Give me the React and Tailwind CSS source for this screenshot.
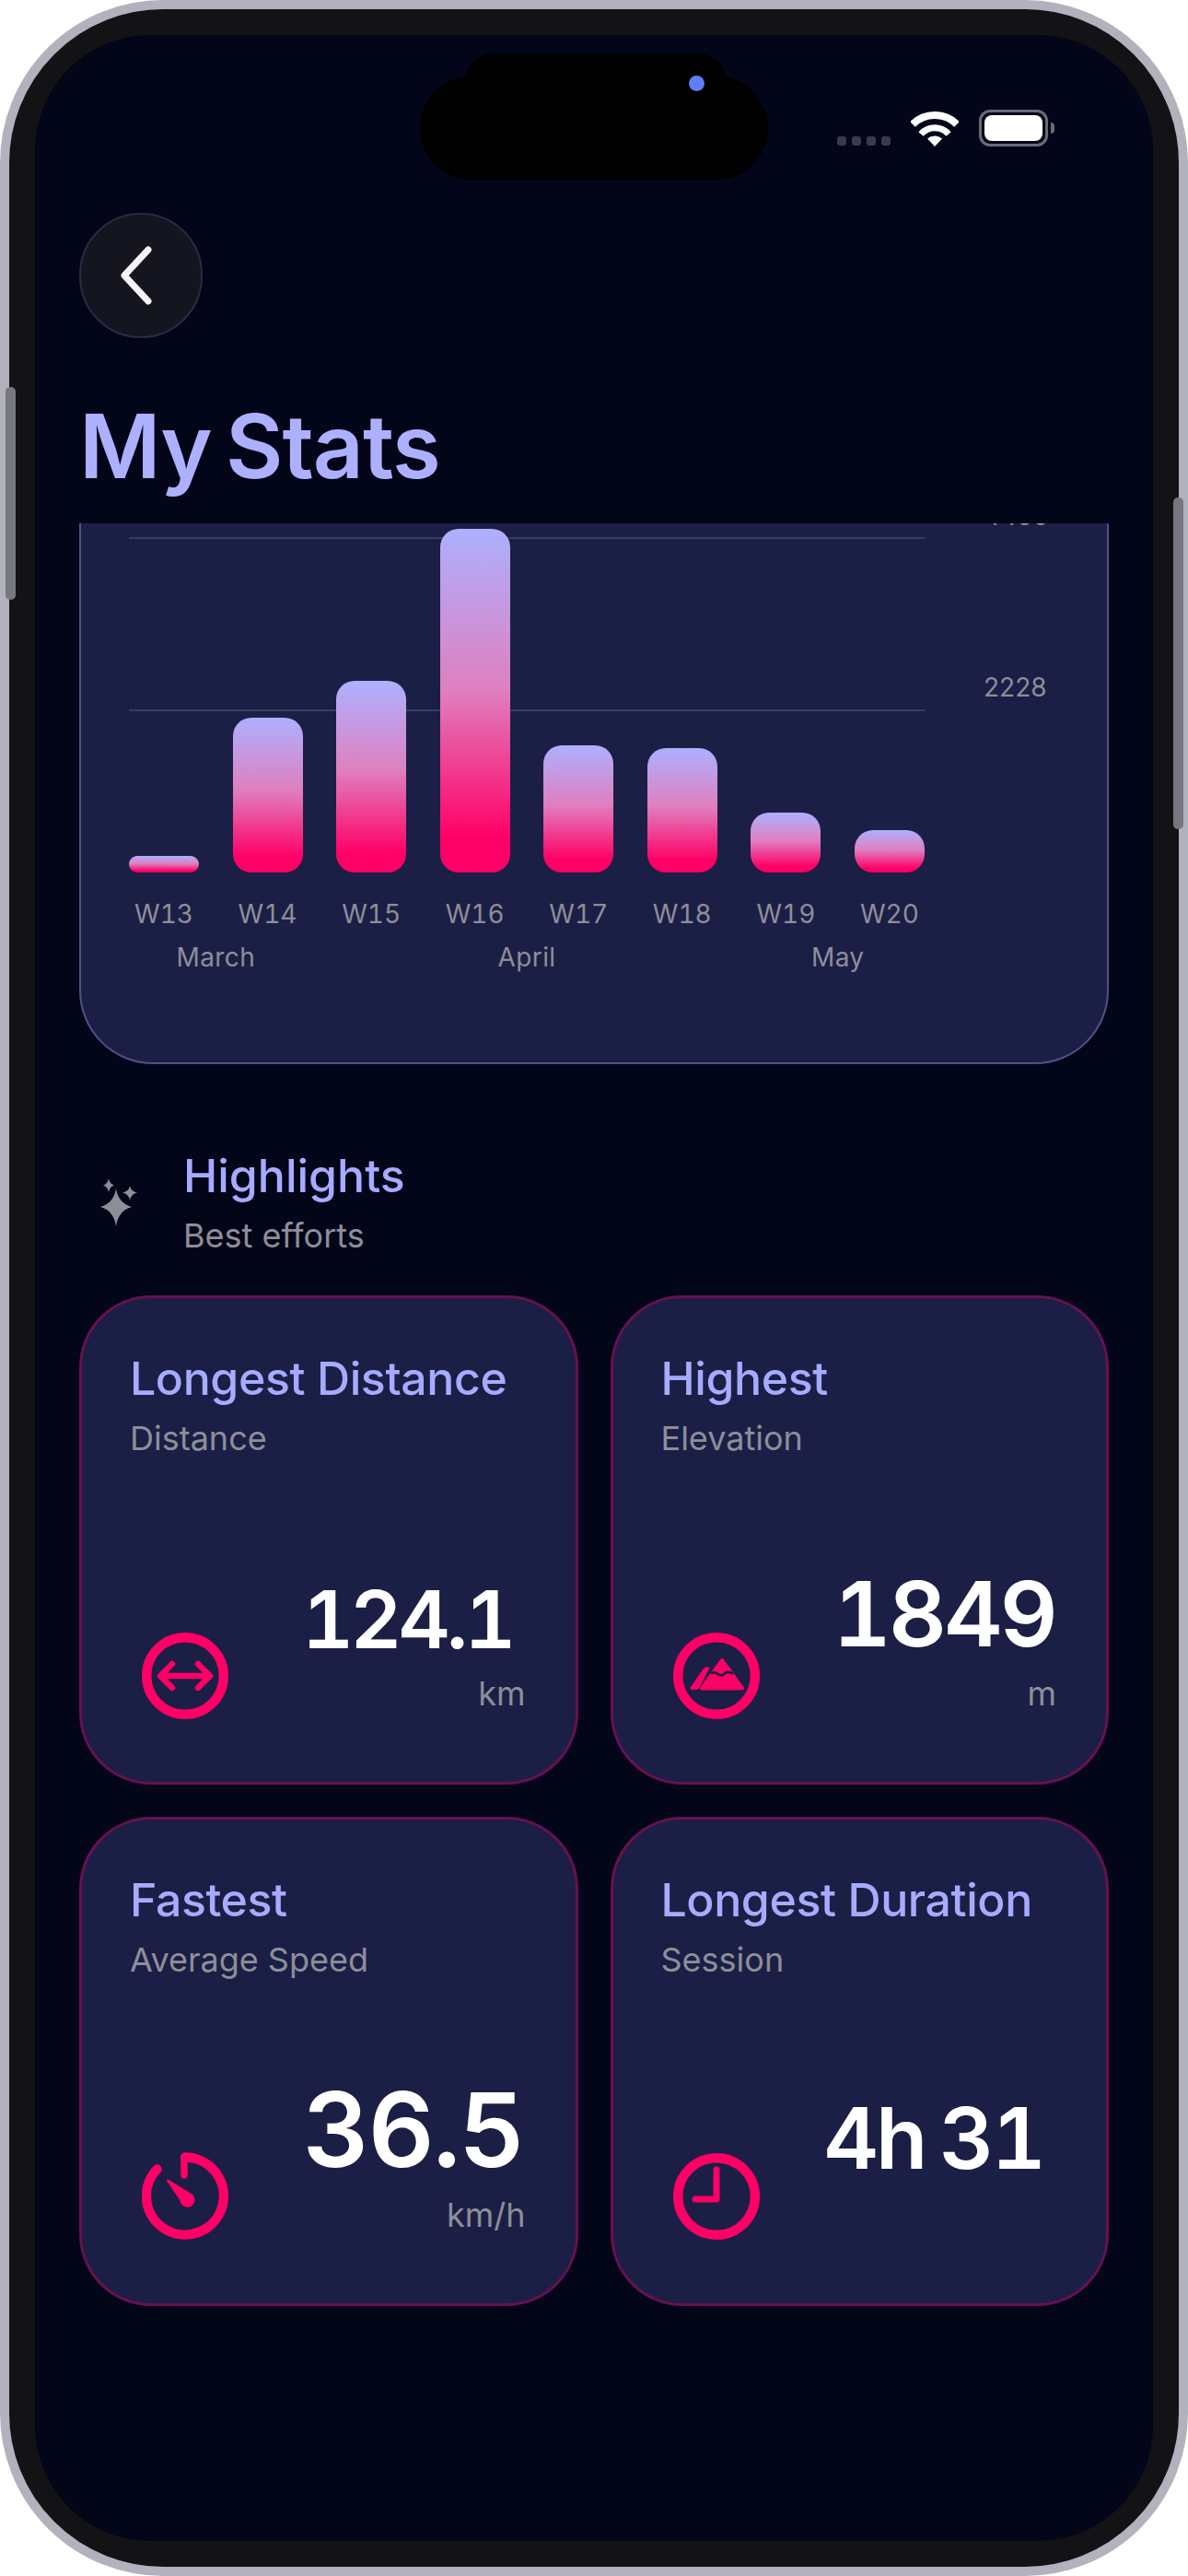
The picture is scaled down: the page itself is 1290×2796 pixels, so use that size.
const bars = [
  { w: "W13", top: 929 },
  { w: "W14", top: 779 },
  { w: "W15", top: 739 },
  { w: "W16", top: 574 },
  { w: "W17", top: 809 },
  { w: "W18", top: 812 },
  { w: "W19", top: 882 },
  { w: "W20", top: 901 },
];

const Ring = ({ children }) => (
  <svg width="94" height="94" viewBox="0 0 94 94" fill="none" className="shrink-0">
    <circle cx="47" cy="47" r="41.8" stroke="#ff0066" strokeWidth="10.4" />
    {children}
  </svg>
);

const DistanceIcon = () => (
  <Ring>
    <path
      d="M22 47H72M33 34L20 47L33 60M61 34L74 47L61 60"
      stroke="#ff0066"
      strokeWidth="6.5"
      strokeLinecap="round"
      strokeLinejoin="round"
    />
  </Ring>
);

const MountainIcon = () => (
  <Ring>
    <path d="M31 60.5L53 30L75 60.5Z" fill="#ff0066" stroke="#ff0066" strokeWidth="4" strokeLinejoin="round" />
    <path d="M41 44.5Q45 42 48.5 45T56 44.5T65 45" stroke="#1b1f45" strokeWidth="2.6" fill="none" />
    <path d="M19 59L33 39Q36 36 39.5 38.5L28 60.5Q27 62 24 62H20.500Q17.500 62 19 59Z" fill="#ff0066" />
  </Ring>
);

const SpeedIcon = () => (
  <svg width="94" height="96" viewBox="0 0 94 96" fill="none" className="shrink-0">
    <path
      d="M47 5.500A42 42 0 1 1 16.500 18.500"
      stroke="#ff0066"
      strokeWidth="10.400"
      strokeLinecap="round"
    />
    <path d="M46 6V25" stroke="#ff0066" strokeWidth="7.500" strokeLinecap="round" />
    <path d="M28.500 29.500L53 44.500A8 8 0 1 1 41.500 52.500L27 31Q26.500 29 28.500 29.500Z" fill="#ff0066" />
  </svg>
);

const ClockIcon = () => (
  <svg width="94" height="96" viewBox="0 0 94 96" fill="none" className="shrink-0">
    <circle cx="47" cy="48" r="41.800" stroke="#ff0066" strokeWidth="10.400" />
    <path d="M47 19V51H24" stroke="#ff0066" strokeWidth="7" strokeLinecap="round" strokeLinejoin="round" />
  </svg>
);

const Sparkles = () => (
  <svg width="42" height="52" viewBox="0 0 42 52" fill="#8e8e99" className="shrink-0">
    <path d="M19 11Q21.500 27 36 31Q21.500 35 19 52Q16.500 35 2 31Q16.500 27 19 11Z" />
    <path d="M11 0Q12 6 17 7.500Q12 9 11 15Q10 9 5 7.500Q10 6 11 0Z" />
    <path d="M34 8Q35 14 42 15.500Q35 17 34 24Q33 17 26 15.500Q33 14 34 8Z" />
  </svg>
);

const Wifi = () => (
  <svg width="52" height="38" viewBox="0 0 52 38" fill="none" className="shrink-0">
    <path d="M2 14A34 34 0 0 1 50 14" stroke="#ffffff" strokeWidth="8" />
    <path d="M11 24.500A20 20 0 0 1 41 24.500" stroke="#ffffff" strokeWidth="7" />
    <path d="M18 29.500A12 12 0 0 1 34 29.500L26 38Z" fill="#ffffff" />
  </svg>
);

const cards = [
  {
    title: "Longest Distance",
    sub: "Distance",
    value: "124.1",
    unit: "km",
    size: "text-[87px] tracking-[-4px] mr-[14px]",
    icon: <DistanceIcon />,
  },
  {
    title: "Highest",
    sub: "Elevation",
    value: "1849",
    unit: "m",
    size: "text-[98px] tracking-[-3px] mr-[1px]",
    icon: <MountainIcon />,
  },
  {
    title: "Fastest",
    sub: "Average Speed",
    value: "36.5",
    unit: "km/h",
    size: "text-[112px] tracking-[-2px] mr-[2px]",
    icon: <SpeedIcon />,
  },
  {
    title: "Longest Duration",
    sub: "Session",
    value: "4h 31",
    unit: "",
    size: "text-[92px] tracking-[-3px] [word-spacing:-6px] mr-[14px]",
    icon: <ClockIcon />,
  },
];

function Card({ title, sub, value, unit, size, icon }) {
  return (
    <div className="flex h-[531px] flex-col rounded-[78px] border-[3px] border-[#6a1050] bg-[#1b1f45]">
      <div className="pl-[52px] pt-[57px]">
        <div className="text-[50px] leading-[60px] font-[550] tracking-[-0.4px] text-[#a6abff]">{title}</div>
        <div className="mt-[13px] text-[36px] leading-[44px] text-[#8e8e99]">{sub}</div>
      </div>
      <div className="mt-auto flex items-end justify-between pb-[68px] pl-[65px] pr-[54px]">
        {icon}
        <div className="flex flex-col items-end">
          <div className={`${size} leading-none font-semibold whitespace-nowrap text-white tabular-nums`}>{value}</div>
          <div className="mt-[15px] mb-[6px] h-[44px] text-[36px] leading-[44px] text-[#8e8e99]">{unit}</div>
        </div>
      </div>
    </div>
  );
}

export default function App() {
  return (
    <div className="relative h-[2796px] w-[1290px] bg-white font-['Inter',sans-serif]">
      <div className="relative h-full w-full rounded-[177px] border-[10px] border-[#b2b2bc] bg-[#131316] p-[28px]">
        <div className="flex h-full flex-col overflow-hidden rounded-[125px] bg-[#030518]">
          {/* status bar */}
          <div className="flex h-[193px] items-start justify-end pr-[107px] pt-[81px]">
            <div className="flex items-end">
              <div className="mb-px flex gap-[6px]">
                <span className="h-[10px] w-[10px] rounded-[3px] bg-[#3a3a48]" />
                <span className="h-[10px] w-[10px] rounded-[3px] bg-[#3a3a48]" />
                <span className="h-[10px] w-[10px] rounded-[3px] bg-[#3a3a48]" />
                <span className="h-[10px] w-[10px] rounded-[3px] bg-[#3a3a48]" />
              </div>
              <div className="ml-[22px]">
                <Wifi />
              </div>
              <div className="ml-[22px] flex items-center">
                <div className="flex h-[40px] w-[75px] items-center justify-center rounded-[12px] border-[3px] border-[#6a6a78]">
                  <div className="h-[28px] w-[63px] rounded-[8px] bg-white" />
                </div>
                <div className="ml-[3px] h-[12px] w-[4px] rounded-r-full bg-[#6a6a78]" />
              </div>
            </div>
          </div>

          {/* back button */}
          <div className="ml-[48px] flex h-[136px] w-[134px] items-center justify-center rounded-full border-2 border-[#2a2b47] bg-[#15151f]">
            <svg width="44" height="66" viewBox="0 0 44 66" fill="none" className="-ml-[9px]">
              <path d="M34 5L8 33L34 61" stroke="#f4f4f8" strokeWidth="7" strokeLinecap="round" strokeLinejoin="round" />
            </svg>
          </div>

          {/* title */}
          <h1 className="ml-[48px] mt-[69px] text-[96px] leading-none font-semibold tracking-[-1px] [word-spacing:-8px] text-[#adb0ff]">
            My Stats
          </h1>

          {/* scrolled content */}
          <div className="mt-[36px] min-h-0 flex-1 overflow-hidden">
            <div className="mx-[48px] -mt-[120px] rounded-[80px] border-2 border-[#4e5288] bg-[#1b1f45] pb-[97px] pl-[52px] pt-[90px]">
              <div className="relative flex h-[407px] w-[864px] items-end justify-between">
                <div className="absolute left-0 right-0 top-[43px] h-[2px] bg-[#3a3d63]" />
                <div className="absolute left-0 right-0 top-[230px] h-[2px] bg-[#3a3d63]" />
                <div className="absolute left-[928px] top-[3px] text-[28px] leading-[34px] text-[#8e8e99]">4456</div>
                <div className="absolute left-[928px] top-[189px] text-[28px] leading-[34px] text-[#8e8e99]">2228</div>
                {bars.map((b) => (
                  <div
                    key={b.w}
                    className="relative w-[76px] bg-[linear-gradient(180deg,#adb0ff_0%,#df7fbf_47%,#ff0066_90%)]"
                    style={{ height: 947 - b.top, borderRadius: Math.min(20, (947 - b.top) / 2) }}
                  />
                ))}
              </div>
              <div className="mt-[28px] flex w-[864px] justify-between">
                {bars.map((b) => (
                  <div key={b.w} className="w-[76px] whitespace-nowrap text-center text-[28px] leading-[34px] text-[#8e8e99] tabular-nums">
                    {b.w}
                  </div>
                ))}
              </div>
              <div className="mt-[13px] grid w-[864px] grid-cols-8 gap-x-[36.6px] text-center text-[28px] leading-[34px] tracking-[0.4px] text-[#8e8e99]">
                <div className="col-span-2">March</div>
                <div className="col-span-4">April</div>
                <div className="col-span-2">May</div>
              </div>
            </div>

            <div className="ml-[69px] mt-[91px] flex items-center gap-[50px]">
              <Sparkles />
              <div>
                <div className="text-[50px] leading-[60px] font-[550] text-[#a6abff]">Highlights</div>
                <div className="mt-[13px] text-[36px] leading-[44px] text-[#8e8e99]">Best efforts</div>
              </div>
            </div>

            <div className="mx-[48px] mt-[43px] grid grid-cols-2 gap-[35px]">
              {cards.map((c) => (
                <Card key={c.title} {...c} />
              ))}
            </div>
          </div>
        </div>
      </div>

      {/* side buttons */}
      <div className="absolute left-[6px] top-[420px] h-[231px] w-[11px] rounded-[5px] bg-[#77777f]" />
      <div className="absolute left-[1274px] top-[540px] h-[360px] w-[11px] rounded-[5px] bg-[#77777f]" />

      {/* dynamic island */}
      <div className="absolute left-[504px] top-[58px] h-[80px] w-[285px] rounded-[32px] bg-black" />
      <div className="absolute left-[456px] top-[83px] h-[112px] w-[378px] rounded-[56px] bg-black" />
      <div className="absolute left-[748px] top-[82px] h-[17px] w-[17px] rounded-full bg-[#5f7dff]" />
    </div>
  );
}
